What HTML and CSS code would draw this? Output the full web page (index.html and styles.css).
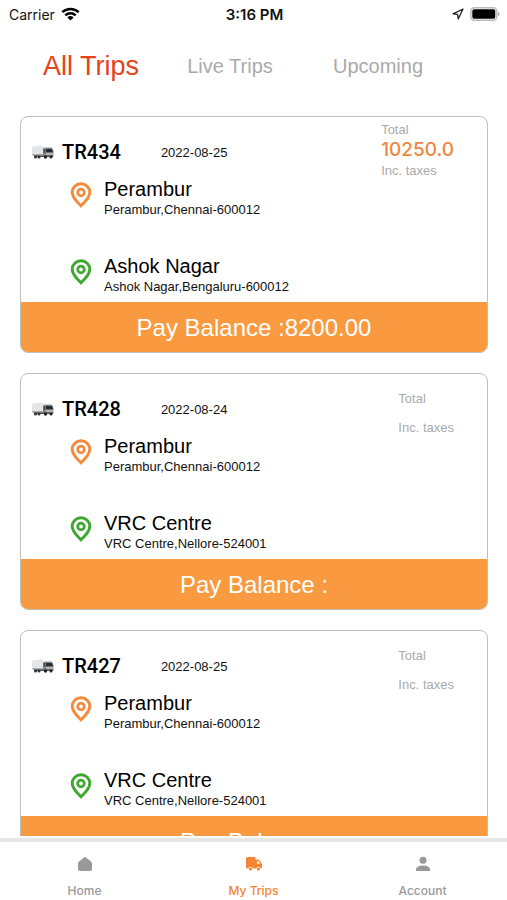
FILE: index.html
```html
<!DOCTYPE html>
<html lang="en">
<head>
    <meta charset="UTF-8">
    <meta name="viewport" content="width=device-width, initial-scale=1.0">
    <title>My Trips</title>
    <link rel="stylesheet" href="styles.css">
</head>
<body>
    <!-- shared icons -->
    <svg class="sprite" aria-hidden="true">
        <symbol id="pin" viewBox="0 0 22 26">
            <path d="M11 23.800C7.600 20.400 2.200 15.300 2.200 10.400a8.800 8.700 0 0 1 17.600 0c0 4.900-5.400 10-8.800 13.400z" fill="none" stroke="currentColor" stroke-width="3"/>
            <circle cx="11" cy="10.500" r="3.300" fill="none" stroke="currentColor" stroke-width="2.800"/>
        </symbol>
        <symbol id="truck" viewBox="0 0 24 14">
            <path d="M1 1.500 10 .5l3 1v9.500L1 10z" fill="#e3e5e6"/>
            <path d="M1 9h12v2H2z" fill="#a7a9aa"/>
            <path d="M12 3.500 14 2.500h7l1.500 4v5H12z" fill="#878c91"/>
            <path d="M15 4h6l1 3.200h-7z" fill="#272c32"/>
            <path d="M12.500 4h1.800v4h-1.800z" fill="#4a5056"/>
            <path d="M15 8.500h7v1h-7z" fill="#d5d7d9"/>
            <path d="M3 10.500h19v1.500H3z" fill="#555"/>
            <circle cx="4.500" cy="12" r="1.500" fill="#333"/>
            <circle cx="8" cy="12" r="1.500" fill="#333"/>
            <circle cx="14.500" cy="12" r="1.700" fill="#222"/>
            <circle cx="20" cy="12" r="1.500" fill="#222"/>
        </symbol>
    </svg>

    <!-- status bar -->
    <header class="status-bar">
        <div class="carrier">
            Carrier
            <svg width="19" height="14" viewBox="0 0 19 14" fill="none" stroke="#000" stroke-width="2.500">
                <path d="M1.300 5.200a11.800 11.800 0 0 1 16.400 0"/>
                <path d="M4.300 8.400a7.500 7.500 0 0 1 10.400 0"/>
                <path d="M9.500 13.500 6.400 10.400a4.400 4.400 0 0 1 6.200 0z" fill="#000" stroke="none"/>
            </svg>
        </div>
        <div class="clock">3:16 PM</div>
        <div class="indicators">
            <svg width="12" height="12" viewBox="0 0 12 12" fill="none" stroke="#222" stroke-width="1.300" stroke-linejoin="round">
                <path d="M11 1 1 5.800l4.600.6.600 4.600z"/>
            </svg>
            <svg width="30" height="14" viewBox="0 0 30 14">
                <rect x=".8" y=".8" width="26" height="12.400" rx="3.500" fill="#fff" stroke="#bbb" stroke-width="1.500"/>
                <rect x="2.300" y="2.300" width="23" height="9.400" rx="1.800" fill="#000"/>
                <path d="M28 4.800c2 .8 2 3.600 0 4.400z" fill="#aaa"/>
            </svg>
        </div>
    </header>

    <!-- trip filter -->
    <div class="tabs">
        <button class="tab active" type="button">All Trips</button>
        <button class="tab" type="button">Live Trips</button>
        <button class="tab" type="button">Upcoming</button>
    </div>

    <!-- trip list -->
    <main class="trips">
        <article class="card">
            <div class="card-head">
                <div class="trip">
                    <svg class="truck"><use href="#truck"/></svg>
                    <span class="code">TR434</span>
                    <span class="date">2022-08-25</span>
                </div>
                <div class="total">
                    <div class="note">Total</div>
                    <div class="price">10250.0</div>
                    <div class="note">Inc. taxes</div>
                </div>
            </div>
            <div class="stops">
                <div class="stop">
                    <svg class="pin from"><use href="#pin"/></svg>
                    <div>
                        <div class="place">Perambur</div>
                        <div class="address">Perambur,Chennai-600012</div>
                    </div>
                </div>
                <div class="stop">
                    <svg class="pin to"><use href="#pin"/></svg>
                    <div>
                        <div class="place">Ashok Nagar</div>
                        <div class="address">Ashok Nagar,Bengaluru-600012</div>
                    </div>
                </div>
            </div>
            <button class="pay" type="button">Pay Balance :8200.00</button>
        </article>

        <article class="card">
            <div class="card-head">
                <div class="trip">
                    <svg class="truck"><use href="#truck"/></svg>
                    <span class="code">TR428</span>
                    <span class="date">2022-08-24</span>
                </div>
                <div class="total">
                    <div class="note">Total</div>
                    <div class="price"></div>
                    <div class="note">Inc. taxes</div>
                </div>
            </div>
            <div class="stops">
                <div class="stop">
                    <svg class="pin from"><use href="#pin"/></svg>
                    <div>
                        <div class="place">Perambur</div>
                        <div class="address">Perambur,Chennai-600012</div>
                    </div>
                </div>
                <div class="stop">
                    <svg class="pin to"><use href="#pin"/></svg>
                    <div>
                        <div class="place">VRC Centre</div>
                        <div class="address">VRC Centre,Nellore-524001</div>
                    </div>
                </div>
            </div>
            <button class="pay" type="button">Pay Balance :</button>
        </article>

        <article class="card">
            <div class="card-head">
                <div class="trip">
                    <svg class="truck"><use href="#truck"/></svg>
                    <span class="code">TR427</span>
                    <span class="date">2022-08-25</span>
                </div>
                <div class="total">
                    <div class="note">Total</div>
                    <div class="price"></div>
                    <div class="note">Inc. taxes</div>
                </div>
            </div>
            <div class="stops">
                <div class="stop">
                    <svg class="pin from"><use href="#pin"/></svg>
                    <div>
                        <div class="place">Perambur</div>
                        <div class="address">Perambur,Chennai-600012</div>
                    </div>
                </div>
                <div class="stop">
                    <svg class="pin to"><use href="#pin"/></svg>
                    <div>
                        <div class="place">VRC Centre</div>
                        <div class="address">VRC Centre,Nellore-524001</div>
                    </div>
                </div>
            </div>
            <button class="pay" type="button">Pay Balance :</button>
        </article>
    </main>

    <!-- bottom navigation -->
    <nav class="bottom-nav">
        <a href="#home" class="nav-item">
            <svg width="16" height="16" viewBox="0 0 16 16" fill="currentColor">
                <path d="M7 1.500q1-.9 2 0l5 4q1 .8 1 2v5.500q0 2-2 2H3q-2 0-2-2V7.500q0-1.200 1-2z"/>
            </svg>
            Home
        </a>
        <a href="#trips" class="nav-item active">
            <svg width="16" height="16" viewBox="0 0 16 16" fill="currentColor">
                <path d="M1.500 1h7q1 0 1 1v1.500H12q.8 0 1.200.6l2.300 3.200q.5.600.5 1.400V11q0 1.500-1.300 1.600a2.300 2.300 0 0 0-4.500 0H6.800a2.300 2.300 0 0 0-4.500 0H1.500Q0 12.500 0 11V2.500Q0 1 1.500 1z"/>
                <path d="M11 5h1.300l1.900 2.700H11z" fill="#fff"/>
                <circle cx="4.500" cy="13" r="1.600"/>
                <circle cx="12.400" cy="13" r="1.600"/>
            </svg>
            My Trips
        </a>
        <a href="#account" class="nav-item">
            <svg width="16" height="16" viewBox="0 0 16 16" fill="currentColor">
                <circle cx="8" cy="4.300" r="3.500"/>
                <path d="M1 15v-1.500C1 10.800 4.500 9.500 8 9.500s7 1.300 7 4V15z"/>
            </svg>
            Account
        </a>
    </nav>
</body>
</html>
```
FILE: styles.css
```css
* {
    box-sizing: border-box;
}

body {
    margin: 0;
    height: 100vh;
    display: flex;
    flex-direction: column;
    overflow: hidden;
    background: #fff;
    color: #111;
    font-family: "Liberation Sans", Arial, sans-serif;
}

button {
    border: none;
    padding: 0;
    background: none;
    font-family: inherit;
    cursor: pointer;
}

svg {
    display: block;
    flex-shrink: 0;
}

.sprite {
    position: absolute;
    width: 0;
    height: 0;
}

/* status bar */
.status-bar {
    display: grid;
    grid-template-columns: 1fr auto 1fr;
    align-items: center;
    height: 28px;
    padding: 0 7px 0 9px;
    font-family: Inter, sans-serif;
    font-size: 14px;
}

.carrier,
.indicators {
    display: flex;
    align-items: center;
    gap: 6px;
}

.indicators {
    justify-content: flex-end;
}

.clock {
    font-size: 15px;
    font-weight: 600;
}

/* trip filter */
.tabs {
    display: grid;
    grid-template-columns: 142fr 136fr 160fr;
    height: 76px;
    padding: 0 49px 0 20px;
}

.tab {
    color: #aaa;
    font-size: 20px;
    white-space: nowrap;
}

.tab.active {
    color: #e5431a;
    font-size: 27px;
}

/* trip list */
.trips {
    flex: 1;
    min-height: 0;
    display: flex;
    flex-direction: column;
    gap: 20px;
    padding: 12px 19px 0 20px;
    margin-bottom: 2px;
    overflow-x: hidden;
    overflow-y: auto;
    scrollbar-width: none;
}

.card {
    flex-shrink: 0;
    border: 1px solid #bfbfbf;
    border-radius: 8px;
    overflow: hidden;
}

.card-head {
    display: flex;
    justify-content: space-between;
    align-items: flex-end;
    height: 62px;
    padding: 0 33px 0 10px;
}

.trip {
    display: flex;
    align-items: center;
    height: 24px;
    margin-bottom: 15px;
}

.truck {
    width: 24px;
    height: 14px;
}

.code {
    margin: 0 40px 0 7px;
    color: #000;
    font-family: Roboto, sans-serif;
    font-size: 20px;
    font-weight: 500;
}

.date {
    font-size: 13px;
}

.note {
    color: #aaa;
    font-size: 13px;
    line-height: 17px;
}

.price {
    min-height: 12px;
    color: #ef8641;
    font-family: Inter, sans-serif;
    font-size: 19px;
    font-weight: 500;
    line-height: 24px;
}

.stops {
    display: flex;
    flex-direction: column;
    gap: 36px;
    padding: 0 16px 5px 49px;
}

.stop {
    display: flex;
    gap: 12px;
}

.pin {
    width: 22px;
    height: 26px;
    margin-top: 3px;
}

.from {
    color: #f58a3c;
}

.to {
    color: #3fa92f;
}

.place {
    color: #000;
    font-size: 20px;
    line-height: 21px;
}

.address {
    font-size: 13px;
    line-height: 20px;
}

.pay {
    display: block;
    width: 100%;
    height: 50px;
    padding-top: 2px;
    background: #f99a40;
    color: #fff;
    font-size: 24px;
}

/* bottom navigation */
.bottom-nav {
    display: flex;
    height: 62px;
    border-top: 4px solid #e6e6e6;
}

.nav-item {
    flex: 1;
    display: flex;
    flex-direction: column;
    align-items: center;
    gap: 11px;
    padding-top: 14px;
    color: #999;
    font-family: Inter, sans-serif;
    font-size: 12px;
    font-weight: 500;
    text-decoration: none;
}

.nav-item.active {
    color: #f48534;
}
```
